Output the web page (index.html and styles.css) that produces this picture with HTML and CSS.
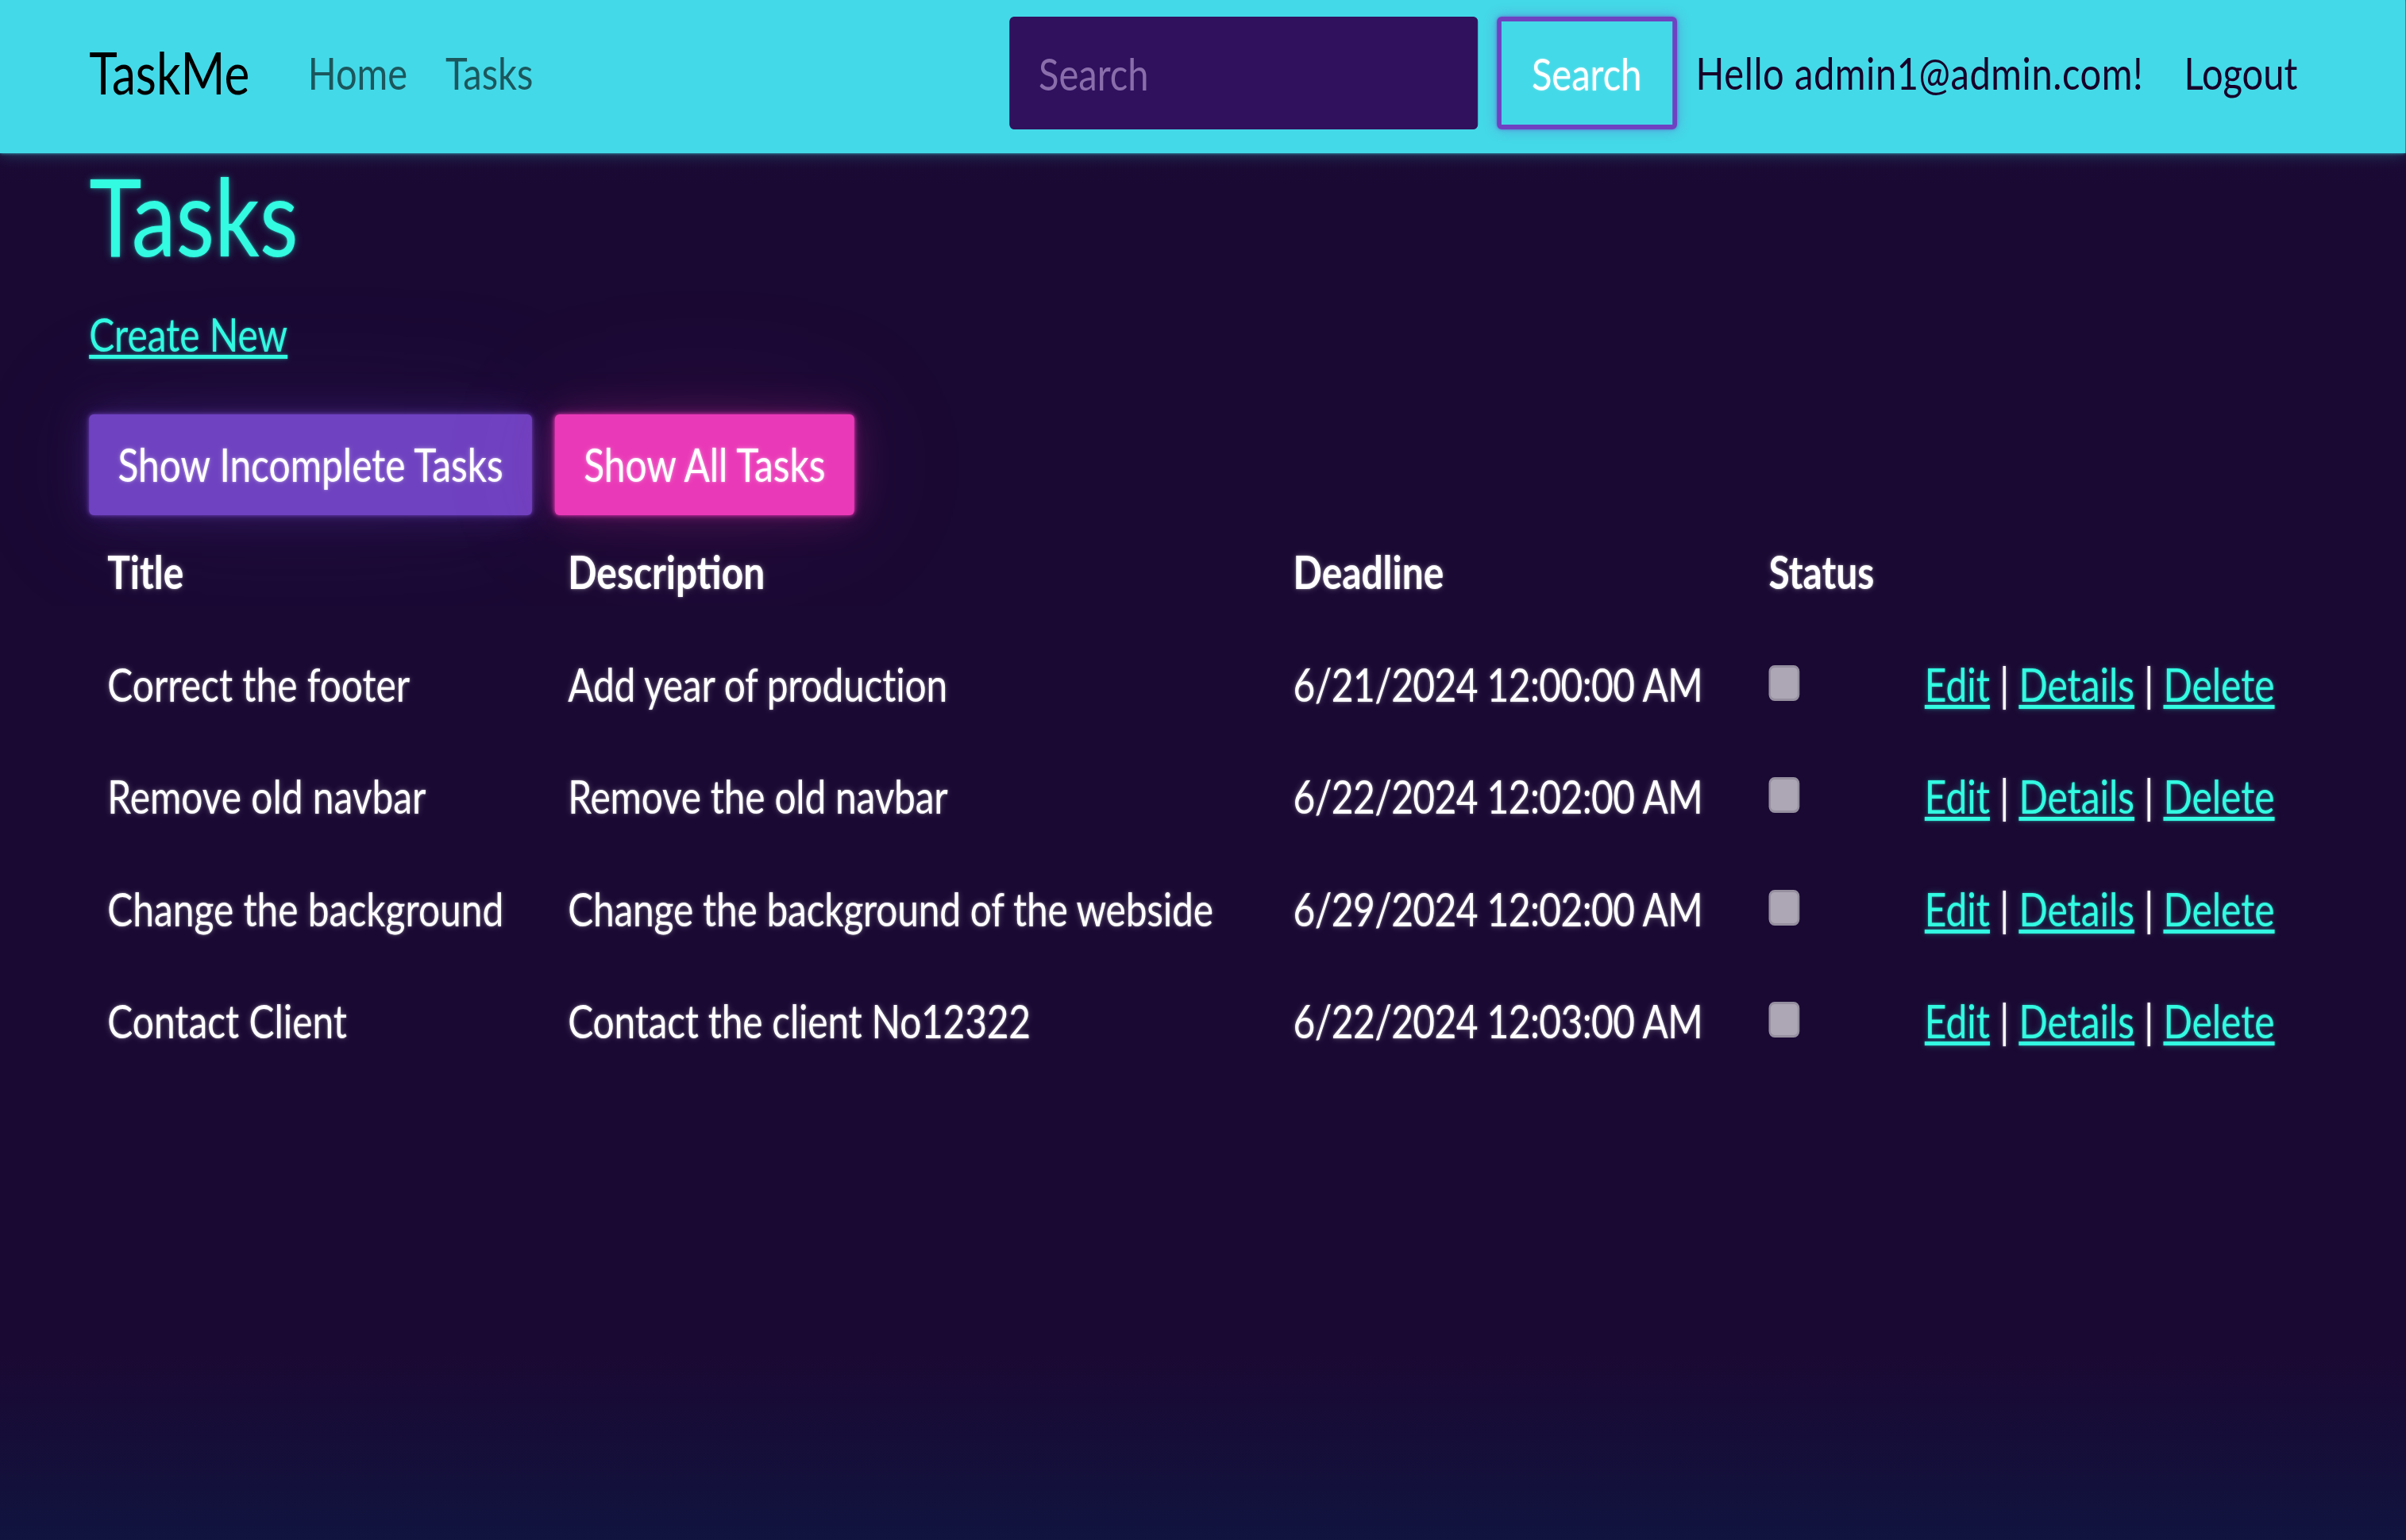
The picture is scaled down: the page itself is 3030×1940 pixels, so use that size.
FILE: index.html
```html
<!DOCTYPE html>
<html lang="en">
<head>
<meta charset="utf-8">
<title>Tasks - TaskMe</title>
<link rel="stylesheet" href="styles.css">
</head>
<body>
<div class="frame">
<div class="page">
  <header class="navbar">
    <a class="brand" href="#">TaskMe</a>
    <nav class="nav-main">
      <a class="nav-link" href="#">Home</a>
      <a class="nav-link" href="#">Tasks</a>
    </nav>
    <form class="search">
      <input class="search-input" type="text" placeholder="Search">
      <button class="search-btn" type="button">Search</button>
    </form>
    <div class="user">
      <span class="nav-link user-text user-hello">Hello admin1@admin.com!</span>
      <a class="nav-link user-text" href="#">Logout</a>
    </div>
  </header>

  <main class="container">
    <h1 class="title">Tasks</h1>
    <p class="create"><a class="link" href="#">Create New</a></p>
    <div class="filters">
      <button class="btn btn-primary" type="button">Show Incomplete Tasks</button>
      <button class="btn btn-secondary" type="button">Show All Tasks</button>
    </div>
    <table class="tasks">
      <colgroup>
        <col class="c-title"><col class="c-desc"><col class="c-dead"><col class="c-status"><col class="c-act">
      </colgroup>
      <thead>
        <tr><th>Title</th><th>Description</th><th>Deadline</th><th>Status</th><th></th></tr>
      </thead>
      <tbody>
        <tr>
          <td>Correct the footer</td>
          <td class="desc">Add year of production</td>
          <td class="date">6/21/2024 12:00:00 AM</td>
          <td><input class="check" type="checkbox" disabled></td>
          <td><a class="link" href="#">Edit</a> | <a class="link" href="#">Details</a> | <a class="link" href="#">Delete</a></td>
        </tr>
        <tr>
          <td>Remove old navbar</td>
          <td class="desc">Remove the old navbar</td>
          <td class="date">6/22/2024 12:02:00 AM</td>
          <td><input class="check" type="checkbox" disabled></td>
          <td><a class="link" href="#">Edit</a> | <a class="link" href="#">Details</a> | <a class="link" href="#">Delete</a></td>
        </tr>
        <tr>
          <td>Change the background</td>
          <td class="desc">Change the background of the webside</td>
          <td class="date">6/29/2024 12:02:00 AM</td>
          <td><input class="check" type="checkbox" disabled></td>
          <td><a class="link" href="#">Edit</a> | <a class="link" href="#">Details</a> | <a class="link" href="#">Delete</a></td>
        </tr>
        <tr>
          <td>Contact Client</td>
          <td class="desc">Contact the client No12322</td>
          <td class="date">6/22/2024 12:03:00 AM</td>
          <td><input class="check" type="checkbox" disabled></td>
          <td><a class="link" href="#">Edit</a> | <a class="link" href="#">Details</a> | <a class="link" href="#">Delete</a></td>
        </tr>
      </tbody>
    </table>
  </main>
</div>
</div>
</body>
</html>
```
FILE: styles.css
```css
html {
  height: 100%;
}

body {
  margin: 0;
  min-height: 100%;
  overflow: hidden;
  font-family: Lato, "Noto Sans", sans-serif;
  background: linear-gradient(to bottom, #1d0c3a 0, #1a0933 12%, #1a0933 88%, #10143f 100%);
}

/* clip the wide pre-squeeze layout box to the window */
.frame {
  width: 100%;
  overflow: hidden;
}

/* the reference is horizontally condensed; lay out wide, then squeeze */
.page {
  width: 3672px;
  transform: scaleX(0.825);
  transform-origin: 0 0;
}

/* ---------- navbar ---------- */
.navbar {
  display: flex;
  align-items: center;
  height: 193px;
  box-sizing: border-box;
  padding: 0 136px 9px 136px;
  background: #44d9e8;
  box-shadow: 0 0 4px rgba(68, 217, 232, 0.8), 0 0 22px rgba(68, 217, 232, 0.3);
  position: relative;
  z-index: 1;
}

.brand {
  font-size: 73px;
  line-height: 1.5;
  color: #000;
  text-decoration: none;
  margin-right: 60px;
}

.nav-main {
  display: flex;
}

.nav-link {
  font-size: 57px;
  line-height: 1.5;
  padding: 0 29px;
  color: rgba(0, 0, 0, 0.6);
  text-decoration: none;
  white-space: nowrap;
}

.search {
  margin: 0 0 0 auto;
  display: flex;
  align-items: center;
  gap: 29px;
}

.search-input {
  width: 715px;
  height: 142px;
  box-sizing: border-box;
  margin: 0;
  padding: 0 44px;
  background: #30115e;
  border: 1px solid #30115e;
  border-radius: 7px / 6px;
  font-family: Lato, "Noto Sans", sans-serif;
  font-size: 57px;
  color: #fff;
  outline: none;
}

.search-input::placeholder {
  color: #8a6eab;
}

.search-btn {
  width: 275px;
  height: 142px;
  box-sizing: border-box;
  margin: 0;
  padding: 0;
  background: transparent;
  border-style: solid;
  border-color: #6f42c1;
  border-width: 6px 7px;
  border-radius: 7px / 6px;
  font-family: Lato, "Noto Sans", sans-serif;
  font-size: 57px;
  color: #fff;
  text-shadow: 0 0 3px rgba(255, 255, 255, 0.4);
  box-shadow: 0 0 4px rgba(111, 66, 193, 0.6), 0 0 18px rgba(111, 66, 193, 0.4);
}

.user {
  display: flex;
  margin-left: 0;
}

.user-text {
  color: #170229;
}

.user-hello {
  letter-spacing: 0.7px;
  padding-right: 33px;
}

/* ---------- content ---------- */
.container {
  padding: 0 136px;
}

.title {
  margin: 0 0 29px;
  font-size: 136px;
  font-weight: 400;
  line-height: 155px;
  color: #32fbe2;
  text-shadow: 0 0 3px rgba(50, 251, 226, 0.6), 0 0 12px rgba(50, 251, 226, 0.35);
}

.create {
  margin: 0 0 58px;
  font-size: 58px;
  line-height: 87px;
}

.link {
  color: #32fbe2;
  text-decoration: underline;
  text-decoration-thickness: 5px;
  text-underline-offset: 4px;
  text-shadow: 0 0 3px rgba(50, 251, 226, 0.5), 0 0 10px rgba(50, 251, 226, 0.25);
}

.filters {
  display: flex;
  gap: 35px;
}

.btn {
  margin: 0;
  padding: 28px 44px 29px;
  border: 0;
  border-radius: 7px / 6px;
  font-family: Lato, "Noto Sans", sans-serif;
  font-size: 58px;
  line-height: 70px;
  color: #fff;
  text-shadow: 0 0 3px rgba(255, 255, 255, 0.55), 0 0 8px rgba(255, 255, 255, 0.25);
}

.btn-primary {
  background: #6f42c1;
  box-shadow: 0 0 6px rgba(111, 66, 193, 0.9), 0 0 14px rgba(111, 66, 193, 0.4), 0 0 56px rgba(111, 66, 193, 0.3), 0 0 200px rgba(111, 66, 193, 0.12);
}

.btn-secondary {
  background: #ea39b8;
  box-shadow: 0 0 6px rgba(234, 57, 184, 0.9), 0 0 14px rgba(234, 57, 184, 0.4), 0 0 56px rgba(234, 57, 184, 0.25), 0 0 200px rgba(234, 57, 184, 0.1);
}

/* ---------- table ---------- */
.tasks {
  width: 3400px;
  table-layout: fixed;
  border-collapse: collapse;
  color: #fff;
  font-size: 58px;
  line-height: 87px;
  text-shadow: 0 0 3px rgba(255, 255, 255, 0.5), 0 0 9px rgba(255, 255, 255, 0.25);
}

.c-title { width: 703px; }
.c-desc { width: 1107px; }
.c-dead { width: 726px; }
.c-status { width: 238px; }
.c-act { width: 626px; }

.tasks th,
.tasks td {
  padding: 27px 28px 27.5px;
  text-align: left;
  vertical-align: top;
  white-space: nowrap;
}

.tasks th {
  font-weight: 700;
}

.tasks .desc {
  letter-spacing: -0.25px;
}

.tasks .date {
  letter-spacing: -0.7px;
}

.check {
  appearance: none;
  -webkit-appearance: none;
  display: inline-block;
  vertical-align: top;
  width: 47px;
  height: 45px;
  margin: 20px 0 0;
  box-sizing: border-box;
  background: #aca6b5;
  border: 3px solid #958f9f;
  border-radius: 9px / 8px;
}
```
